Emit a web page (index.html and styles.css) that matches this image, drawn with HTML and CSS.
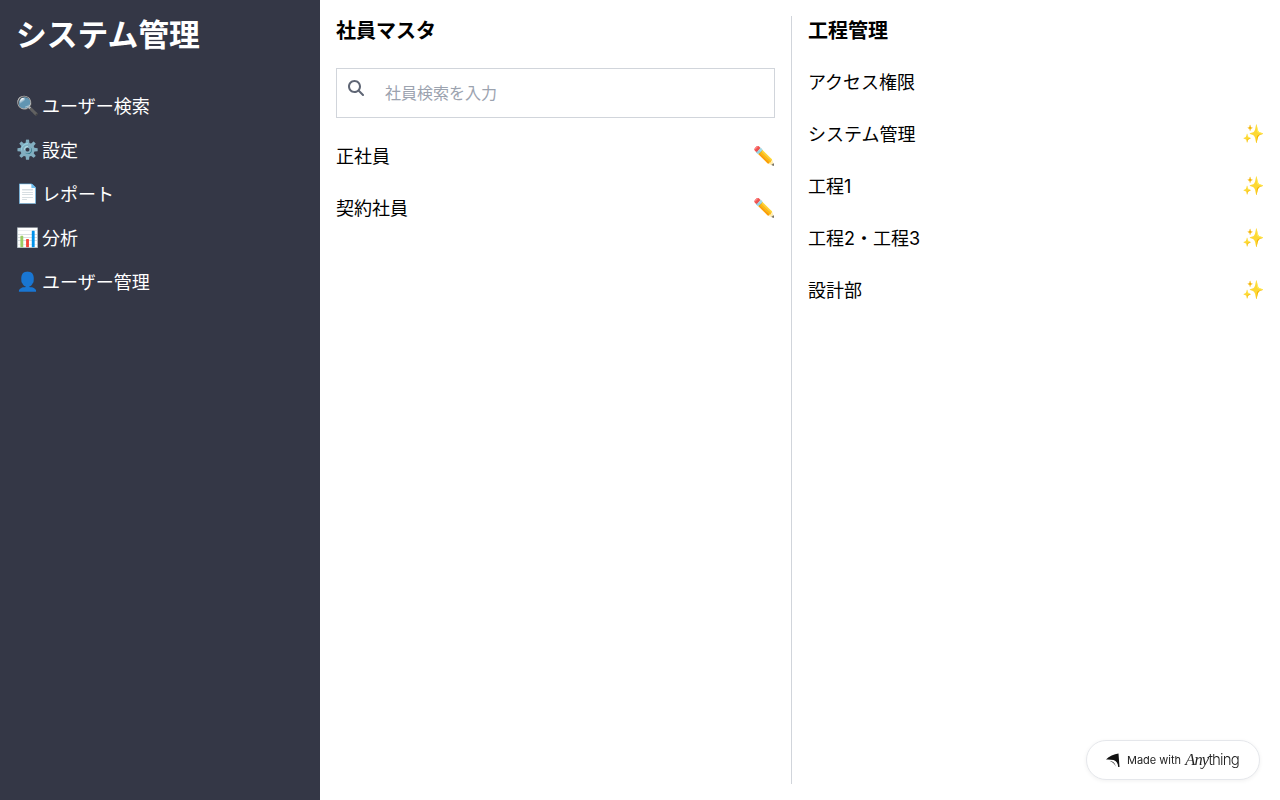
FILE: index.html
```html
<!DOCTYPE html>
<html lang="ja">
<head>
<meta charset="utf-8">
<title>システム管理</title>
<link rel="stylesheet" href="styles.css">
</head>
<body>
<div class="app">
  <aside class="sidebar">
    <h1 class="brand">システム管理</h1>
    <nav class="nav">
      <a class="nav-item"><span class="nav-emoji">🔍</span><span class="nav-text">ユーザー検索</span></a>
      <a class="nav-item"><span class="nav-emoji">⚙️</span><span class="nav-text">設定</span></a>
      <a class="nav-item"><span class="nav-emoji">📄</span><span class="nav-text">レポート</span></a>
      <a class="nav-item"><span class="nav-emoji">📊</span><span class="nav-text">分析</span></a>
      <a class="nav-item"><span class="nav-emoji">👤</span><span class="nav-text">ユーザー管理</span></a>
    </nav>
  </aside>
  <main class="main">
    <section class="col col-left">
      <h2 class="col-title">社員マスタ</h2>
      <div class="search">
        <svg class="search-icon" viewBox="0 0 512 512" aria-hidden="true"><path d="M416 208c0 45.900-14.900 88.300-40 122.700L502.600 457.400c12.500 12.500 12.500 32.800 0 45.300s-32.800 12.500-45.300 0L330.700 376c-34.400 25.200-76.800 40-122.700 40C93.100 416 0 322.900 0 208S93.100 0 208 0S416 93.100 416 208zM208 352a144 144 0 1 0 0-288 144 144 0 1 0 0 288z"/></svg>
        <span class="placeholder">社員検索を入力</span>
      </div>
      <ul class="list list-left">
        <li class="row"><span class="label">正社員</span><span class="emoji">✏️</span></li>
        <li class="row"><span class="label">契約社員</span><span class="emoji">✏️</span></li>
      </ul>
    </section>
    <section class="col col-right">
      <h2 class="col-title">工程管理</h2>
      <ul class="list list-right">
        <li class="row"><span class="label">アクセス権限</span></li>
        <li class="row"><span class="label">システム管理</span><span class="emoji">✨</span></li>
        <li class="row"><span class="label">工程1</span><span class="emoji">✨</span></li>
        <li class="row"><span class="label">工程2・工程3</span><span class="emoji">✨</span></li>
        <li class="row"><span class="label">設計部</span><span class="emoji">✨</span></li>
      </ul>
    </section>
  </main>
</div>
<div class="badge">
  <svg class="badge-logo" viewBox="0 0 16 16" aria-hidden="true"><path d="M1 7.500C4 4 9 2 13.500 1.500L14.500 15L13.200 15C13 11.500 11.500 9 8.500 8C6 7.500 3.500 7.300 1 7.500ZM4.500 8.800C7.500 9 10 11 10.800 14.500C9.500 11.800 7.500 10 4.500 8.800Z"/></svg>
  <span class="badge-made">Made with</span>
  <span class="badge-word"><em class="badge-any">Any</em>thing</span>
</div>
</body>
</html>
```
FILE: styles.css
```css
* { box-sizing: border-box; }
html, body { margin: 0; height: 100%; }
body {
  font-family: Inter, "Noto Sans CJK JP", "Noto Color Emoji", sans-serif;
  color: #000;
  background: #fff;
  overflow: hidden;
}
.app { display: flex; height: 800px; }
.sidebar {
  width: 320px;
  flex: none;
  background: #343746;
  color: #fff;
  padding: 16px;
}
.brand {
  margin: 0 0 31px;
  padding-top: 1px;
  height: 36px;
  font-size: 30.8px;
  line-height: 36px;
  font-weight: 700;
}
.nav { display: flex; flex-direction: column; }
.nav-item {
  display: flex;
  align-items: center;
  gap: 3px;
  height: 44px;
  font-size: 18px;
}
.nav-emoji { font-size: 18.5px; }
.main { flex: 1; display: flex; padding: 16px 0; }
.col { padding: 0 16px; }
.col-left { width: 472px; border-right: 1px solid #d1d5db; }
.col-right { flex: 1; }
.col-title {
  margin: 0 0 24px;
  padding-top: 1px;
  height: 28px;
  font-size: 20px;
  line-height: 28px;
  font-weight: 700;
}
.search {
  position: relative;
  height: 50px;
  border: 1px solid #d1d5db;
  display: flex;
  align-items: center;
  padding-left: 48px;
  padding-bottom: 2px;
}
.search-icon {
  position: absolute;
  left: 11px;
  top: 11px;
  width: 16px;
  height: 16px;
  fill: #5f6675;
}
.placeholder { font-size: 16px; color: #9ca3af; }
.list { list-style: none; margin: 0; padding: 0; }
.list-left { margin-top: 12px; }
.list-right { margin-top: -12px; }
.row {
  display: flex;
  justify-content: space-between;
  align-items: center;
  height: 52px;
  font-size: 18px;
}
.label { padding-bottom: 2px; }
.emoji { font-size: 18px; padding-bottom: 2px; margin-right: -1px; }
.badge {
  position: fixed;
  right: 20px;
  bottom: 20px;
  width: 174px;
  height: 40px;
  border-radius: 20px;
  background: #fff;
  border: 1px solid #e5e7eb;
  box-shadow: 0 1px 4px rgba(0,0,0,.06);
  display: flex;
  align-items: center;
  padding-left: 18px;
  color: #222;
}
.badge-logo { width: 16px; height: 16px; fill: #111; margin-right: 6px; }
.badge-made { font-size: 11px; margin-right: 4px; }
.badge-word { font-size: 15px; letter-spacing: -.8px; font-weight: 300; }
.badge-any { font-family: "Liberation Serif", serif; font-size: 16.5px; }
```
